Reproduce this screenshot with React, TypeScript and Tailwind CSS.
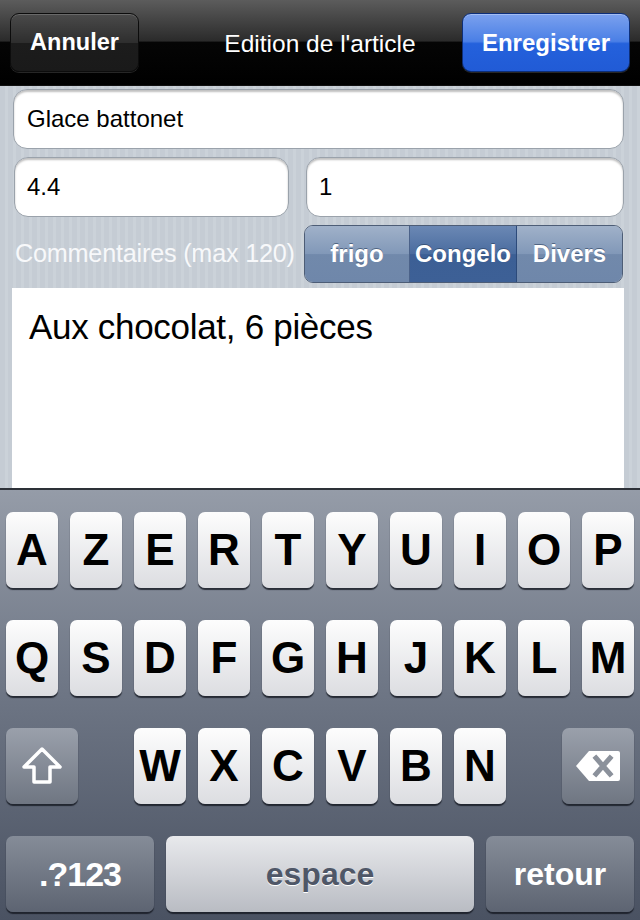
import React from 'react';

const row1 = ['A', 'Z', 'E', 'R', 'T', 'Y', 'U', 'I', 'O', 'P'];
const row2 = ['Q', 'S', 'D', 'F', 'G', 'H', 'J', 'K', 'L', 'M'];
const row3 = ['W', 'X', 'C', 'V', 'B', 'N'];

const font = { fontFamily: '"Liberation Sans", Arial, sans-serif' };

const LetterKey: React.FC<{ label: string }> = ({ label }) => (
  <div className="w-[52px] h-[76px] rounded-[7px] bg-[linear-gradient(#fdfdfd,#dcdde1)] shadow-[0_2px_1px_rgba(20,24,32,0.8)] flex items-center justify-center text-[44px] font-bold text-black leading-none">
    {label}
  </div>
);

const ShiftIcon = () => (
  <svg width="44" height="40" viewBox="0 0 44 40">
    <path
      d="M22 3 L40 21 L30 21 L30 36 L14 36 L14 21 L4 21 Z"
      fill="none"
      stroke="#fff"
      strokeWidth="3.5"
      strokeLinejoin="round"
    />
  </svg>
);

const BackspaceIcon = () => (
  <svg width="48" height="34" viewBox="0 0 48 34">
    <path d="M2 17 L15 2 L44 2 Q46 2 46 4 L46 30 Q46 32 44 32 L15 32 Z" fill="#fff" />
    <path d="M22 9 L36 25 M36 9 L22 25" stroke="#8b919b" strokeWidth="5" strokeLinecap="square" />
  </svg>
);

const App: React.FC = () => {
  return (
    <div className="w-[640px] h-[920px] flex flex-col overflow-hidden" style={font}>
      {/* Navigation bar */}
      <header className="h-[86px] shrink-0 px-[10px] flex items-center justify-between bg-[linear-gradient(#5c5c5c,#2b2b2b_48%,#050505_50%,#000)] border-b border-[#111]">
        <button className="w-[129px] h-[59px] rounded-[9px] border border-[#0c0c0c] bg-[linear-gradient(#4a4a4a,#2e2e2e_50%,#1c1c1c_51%,#1a1a1a)] shadow-[inset_0_1px_0_rgba(255,255,255,0.18),0_1px_0_rgba(255,255,255,0.15)] text-white text-[23.5px] font-bold">
          Annuler
        </button>
        <h1 className="text-white text-[24.5px] font-normal ml-[39px] mt-[3px]">Edition de l'article</h1>
        <button className="w-[168px] h-[59px] rounded-[9px] border border-[#0d2f7a] bg-[linear-gradient(#7ba1ee,#4a7fe6_48%,#2461dc_52%,#215bd6)] shadow-[inset_0_1px_0_rgba(255,255,255,0.3),0_1px_0_rgba(255,255,255,0.15)] text-white text-[24px] font-bold">
          Enregistrer
        </button>
      </header>

      {/* Form content */}
      <main className="flex-1 flex flex-col pl-[13px] pr-[16px] pt-[3px] bg-[repeating-linear-gradient(90deg,#c5ccd4_0px,#c5ccd4_5px,#cbd2d9_5px,#cbd2d9_8px)]">
        <div className="h-[60px] rounded-[14px] bg-white border border-[#9aa2ab] shadow-[inset_0_2px_2px_rgba(0,0,0,0.25)] flex items-center px-[13px] text-[24px] text-black">
          Glace battonet
        </div>
        <div className="mt-[8px] flex gap-[17px]">
          <div className="ml-[1px] w-[275px] h-[60px] rounded-[14px] bg-white border border-[#9aa2ab] shadow-[inset_0_2px_2px_rgba(0,0,0,0.25)] flex items-center px-[12px] text-[24px] text-black">
            4.4
          </div>
          <div className="flex-1 h-[60px] rounded-[14px] bg-white border border-[#9aa2ab] shadow-[inset_0_2px_2px_rgba(0,0,0,0.25)] flex items-center px-[12px] text-[24px] text-black">
            1
          </div>
        </div>
        <div className="mt-[8px] flex items-center justify-between">
          <span className="ml-[2px] text-[25.2px] text-[#f7f8fa] tracking-[-0.2px]">
            Commentaires (max 120)
          </span>
          <div className="w-[319px] h-[58px] mr-[1px] rounded-[9px] border border-[#4d5d76] overflow-hidden flex text-white text-[24px] font-bold [text-shadow:0_-1px_0_rgba(40,60,90,0.6)]">
            <div className="w-[105px] flex items-center justify-center bg-[linear-gradient(#a0b1c9,#8198b8_50%,#7189ab_51%,#6f87aa)] border-r border-[#4b6289]">
              frigo
            </div>
            <div className="w-[107px] flex items-center justify-center bg-[linear-gradient(#6b88b4,#4a6c9f_50%,#3c5f95_51%,#3d6096)] border-r border-[#2c4a7a]">
              Congelo
            </div>
            <div className="flex-1 flex items-center justify-center bg-[linear-gradient(#a0b1c9,#8198b8_50%,#7189ab_51%,#6f87aa)]">
              Divers
            </div>
          </div>
        </div>
        <div className="mt-[5px] -ml-[1px] flex-1 bg-white px-[17px] pt-[21px] text-[35px] tracking-[-0.3px] text-black leading-none">
          Aux chocolat, 6 pièces
        </div>
      </main>

      {/* Keyboard */}
      <section className="h-[432px] shrink-0 border-t-2 border-[#2d3138] bg-[linear-gradient(#959ca8,#6f7786_45%,#4a5262)] px-[6px] pt-[22px] flex flex-col gap-[32px]">
        <div className="flex justify-between">
          {row1.map((k) => (
            <LetterKey key={k} label={k} />
          ))}
        </div>
        <div className="flex justify-between">
          {row2.map((k) => (
            <LetterKey key={k} label={k} />
          ))}
        </div>
        <div className="flex justify-between items-center">
          <div className="w-[72px] h-[76px] rounded-[7px] bg-[linear-gradient(#9aa0ab,#6f7682)] shadow-[0_2px_1px_rgba(20,24,32,0.8)] flex items-center justify-center">
            <ShiftIcon />
          </div>
          <div className="flex gap-[12px]">
            {row3.map((k) => (
              <LetterKey key={k} label={k} />
            ))}
          </div>
          <div className="w-[72px] h-[76px] rounded-[7px] bg-[linear-gradient(#9aa0ab,#6f7682)] shadow-[0_2px_1px_rgba(20,24,32,0.8)] flex items-center justify-center">
            <BackspaceIcon />
          </div>
        </div>
        <div className="flex gap-[12px]">
          <div className="w-[148px] h-[76px] rounded-[7px] bg-[linear-gradient(#858c98,#5d6472)] shadow-[0_2px_1px_rgba(20,24,32,0.8)] flex items-center justify-center text-white text-[34px] font-bold tracking-[-1px]">
            .?123
          </div>
          <div className="flex-1 h-[76px] rounded-[7px] bg-[linear-gradient(#e8e9ec,#b9bcc3)] shadow-[0_2px_1px_rgba(20,24,32,0.8)] flex items-center justify-center text-[#4f5767] text-[32px] font-bold [text-shadow:0_1px_0_#fff]">
            espace
          </div>
          <div className="w-[148px] h-[76px] rounded-[7px] bg-[linear-gradient(#858c98,#5d6472)] shadow-[0_2px_1px_rgba(20,24,32,0.8)] flex items-center justify-center text-white text-[32px] font-bold">
            retour
          </div>
        </div>
      </section>
    </div>
  );
};

export default App;
